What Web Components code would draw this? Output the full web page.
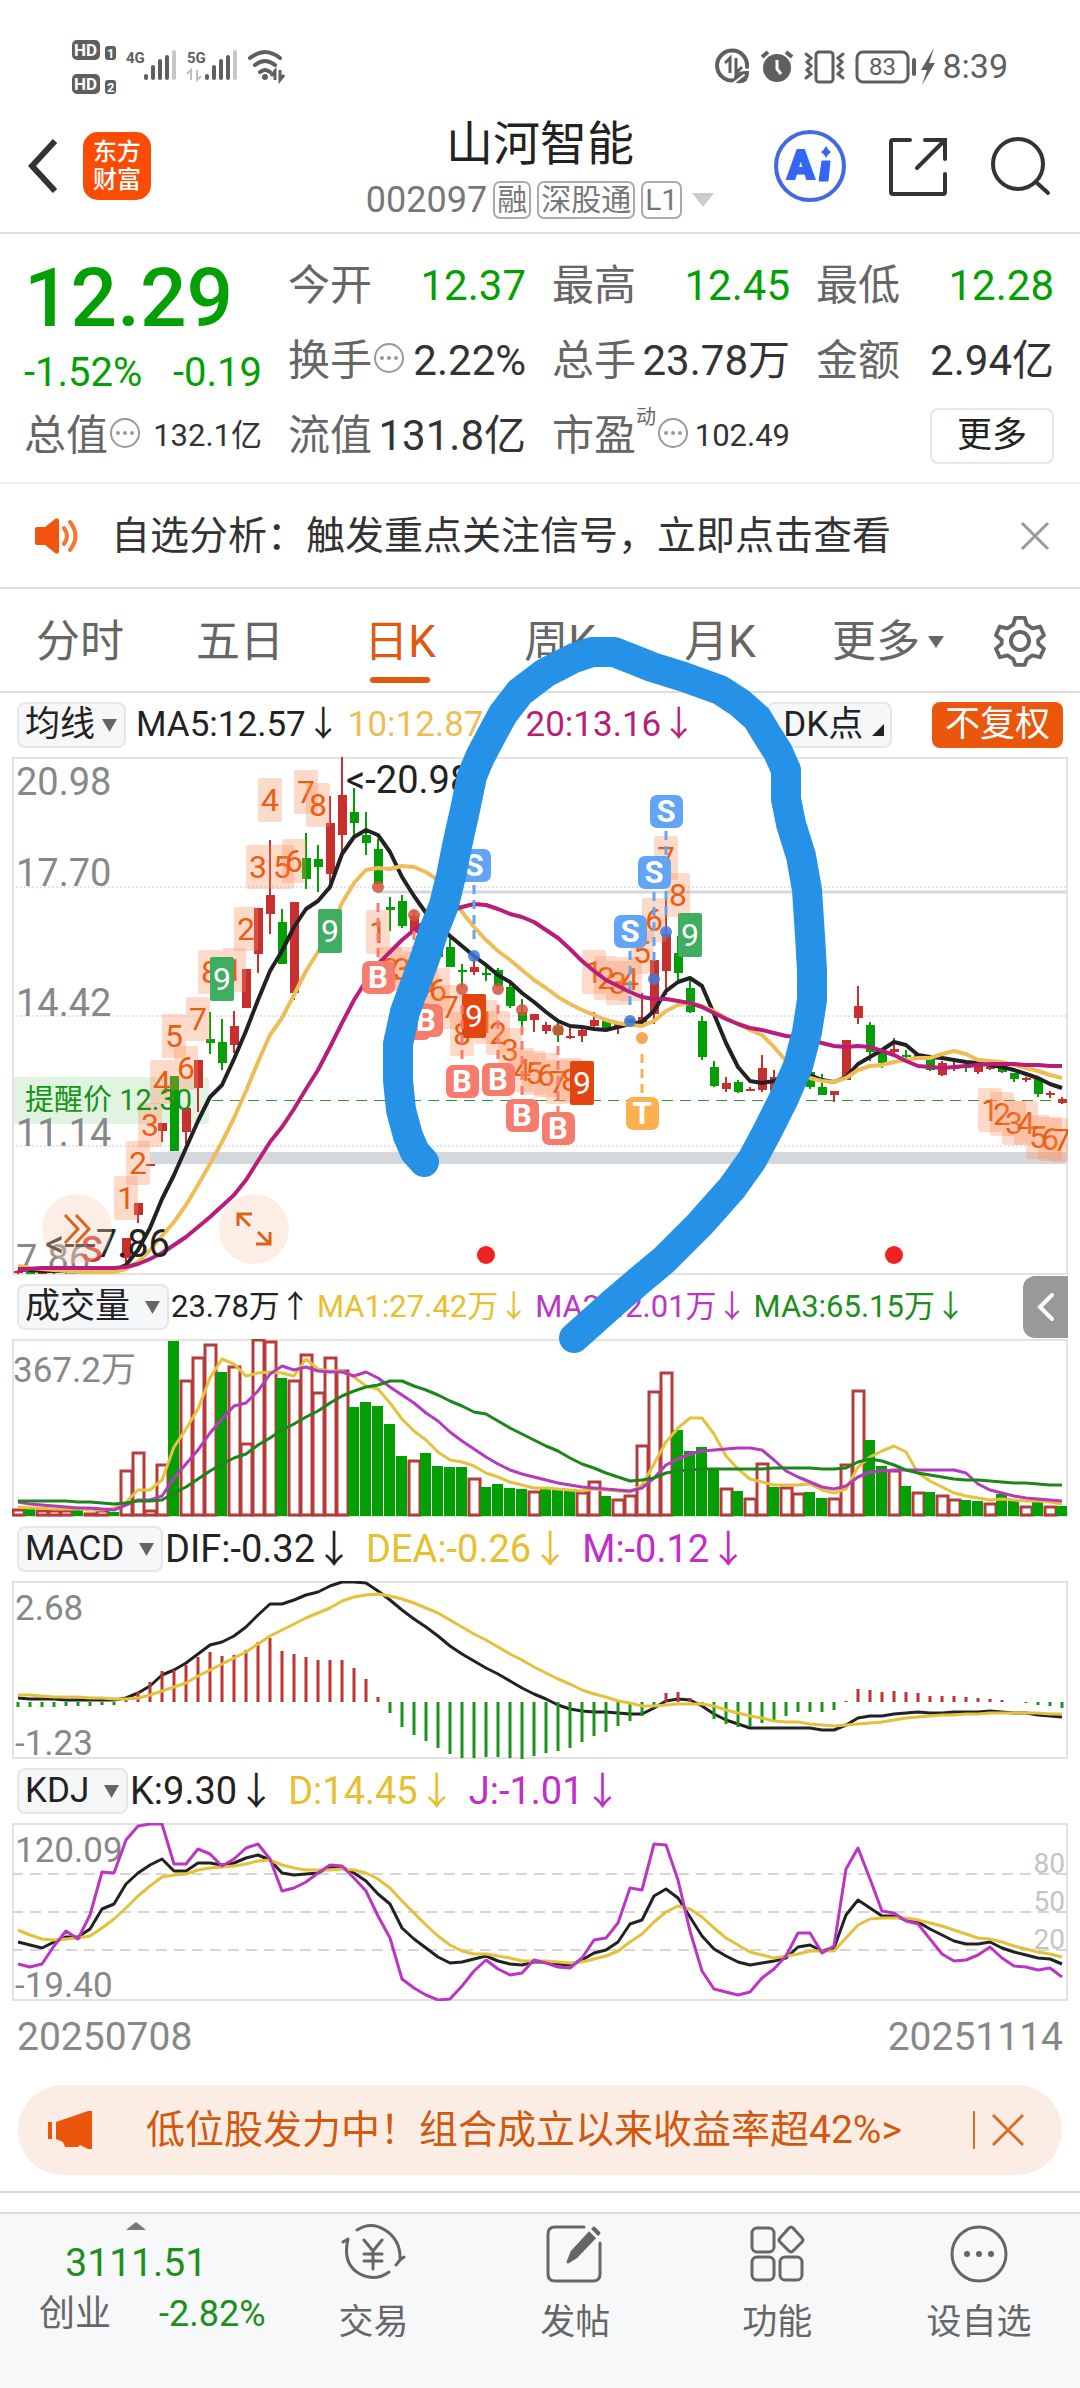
<!DOCTYPE html>
<html lang="zh-CN">
<head>
<meta charset="utf-8">
<meta name="viewport" content="width=device-width, initial-scale=1">
<title>山河智能 002097</title>
<style>
  body {
    margin: 0;
    background: #fff;
    color: #222;
    font-family: Roboto, "Noto Sans CJK SC", sans-serif;
  }
</style>
</head>
<body>
<stock-page>
  <status-bar></status-bar>
  <stock-header name="山河智能" code="002097"></stock-header>
  <quote-panel></quote-panel>
  <notice-bar>自选分析：触发重点关注信号，立即点击查看</notice-bar>
  <period-tabs></period-tabs>
  <indicator-row name="均线" wide>
    <value-item>MA5:12.57↓</value-item>
    <value-item color="#efbd57">10:12.87↓</value-item>
    <value-item color="#b81d7b">20:13.16↓</value-item>
    <chart-actions slot="end"></chart-actions>
  </indicator-row>
  <k-chart></k-chart>
  <indicator-row name="成交量" small>
    <value-item>23.78万↑</value-item>
    <value-item color="#e6c02e">MA1:27.42万↓</value-item>
    <value-item color="#bc36c4">MA2:42.01万↓</value-item>
    <value-item color="#1c8f1c">MA3:65.15万↓</value-item>
    <side-toggle slot="end"></side-toggle>
  </indicator-row>
  <volume-chart></volume-chart>
  <indicator-row name="MACD">
    <value-item>DIF:-0.32↓</value-item>
    <value-item color="#e6c02e">DEA:-0.26↓</value-item>
    <value-item color="#bf2fc7">M:-0.12↓</value-item>
  </indicator-row>
  <macd-chart></macd-chart>
  <indicator-row name="KDJ">
    <value-item>K:9.30↓</value-item>
    <value-item color="#e6c02e">D:14.45↓</value-item>
    <value-item color="#bf2fc7">J:-1.01↓</value-item>
  </indicator-row>
  <kdj-chart></kdj-chart>
  <date-range from="20250708" to="20251114"></date-range>
  <promo-banner>低位股发力中！组合成立以来收益率超42%&gt;</promo-banner>
  <bottom-bar></bottom-bar>
</stock-page>

<script>
class BaseElement extends HTMLElement {
  constructor() {
    super();
    this.attachShadow({ mode: "open" });
  }

  getTemplate() {
    const template = document.createElement("template");
    template.innerHTML = `
      ${this.getStyles()}
      ${this.getMarkup()}
    `;
    return template;
  }

  getStyles() {
    return "";
  }

  getMarkup() {
    return "<slot></slot>";
  }

  render() {
    this.shadowRoot.appendChild(this.getTemplate().content.cloneNode(true));
  }

  connectedCallback() {
    this.render();
  }
}

class StockPage extends BaseElement {
  getStyles() {
    return `
      <style>
        :host {
          display: block;
          position: relative;
        }

        .ink {
          position: absolute;
          top: 0;
          left: 0;
          width: 100%;
          pointer-events: none;
        }
      </style>
    `;
  }

  getMarkup() {
    return `
      <slot></slot>
      <svg class="ink" viewBox="0 0 1080 2388" aria-hidden="true">
        <polyline fill="none" stroke="#2592e8" stroke-width="30" stroke-linecap="round" stroke-linejoin="round"
          points="424,1162 415,1152 408,1136 401,1110 398,1080 398,1044 405,1012 416,982 425,958 434,930 444,905 451,876 457,846 465,810 472,776 480,757 490,738 503,714 520,692 545,673 574,658 592,652 614,652 632,659 652,667 684,677 720,690 740,703 757,718 766,733 778,752 786,770 786,799 791,824 801,856 807,890 810,936 812,970 812,1000 807,1032 798,1066 784,1098 768,1130 752,1160 732,1188 700,1224 664,1260 640,1280 612,1304 574,1338" />
      </svg>
    `;
  }
}

class StatusBar extends BaseElement {
  getStyles() {
    return `
      <style>
        :host {
          display: flex;
          justify-content: space-between;
          padding: 36px 72px 0;
          height: 100px;
          box-sizing: border-box;
          color: #5f5f5f;
        }

        .right {
          display: flex;
          align-items: flex-start;
          gap: 8px;
        }

        .time {
          font-size: 34px;
          line-height: 60px;
          height: 60px;
        }

        svg {
          display: block;
          overflow: visible;
        }
      </style>
    `;
  }

  bars(x) {
    return `
      <g fill="currentColor">
        <rect x="${x}" y="38" width="4" height="6" rx="2" />
        <rect x="${x + 7}" y="29" width="4" height="15" rx="2" />
        <rect x="${x + 14}" y="23" width="4" height="21" rx="2" />
        <rect x="${x + 21}" y="19" width="4" height="25" rx="2" />
        <rect x="${x + 28}" y="14" width="4" height="30" rx="2" opacity=".35" />
      </g>`;
  }

  getMarkup() {
    return `
      <svg width="214" height="60" font-family="Roboto" font-weight="700">
        <rect x="0" y="4" width="28" height="20" rx="5" fill="currentColor" />
        <text x="2" y="20" font-size="17" fill="#fff">HD</text>
        <rect x="33" y="10" width="11" height="14" rx="3" fill="currentColor" />
        <text x="35" y="22" font-size="13" fill="#fff">1</text>
        <rect x="0" y="38" width="28" height="20" rx="5" fill="currentColor" />
        <text x="2" y="54" font-size="17" fill="#fff">HD</text>
        <rect x="33" y="44" width="11" height="14" rx="3" fill="currentColor" />
        <text x="35" y="56" font-size="13" fill="#fff">2</text>
        <text x="54" y="27" font-size="15" fill="currentColor">4G</text>
        ${this.bars(72)}
        <text x="115" y="27" font-size="15" fill="currentColor">5G</text>
        ${this.bars(133)}
        <path d="M119 44V34l-4 4M125 34v10l4-4" fill="none" stroke="currentColor" stroke-width="2" opacity=".4" />
        <g fill="none" stroke="currentColor" stroke-width="4" stroke-linecap="round">
          <path d="M178 22q15-12 30 0" />
          <path d="M183 29q10-8 20 0" />
          <path d="M188 36q5-4 10 0" />
        </g>
        <circle cx="193" cy="41" r="3" fill="currentColor" />
        <path d="M203 44V35l-4 5M208 34v10l4-5" fill="none" stroke="currentColor" stroke-width="3" />
      </svg>
      <div class="right">
        <svg width="218" height="60" fill="none" stroke="currentColor" stroke-width="3" stroke-linecap="round">
          <path d="M20 44A15 15 0 1 1 31 31" stroke-width="4" />
          <path d="M14 37V22l-5 5M20 22v15l6-6" stroke-linecap="butt" />
          <path d="M18 46q-2-12 15-11 0 14-12 12" fill="currentColor" stroke="none" />
          <path d="M15 49l13-10" stroke="#fff" stroke-width="2" />
          <circle cx="61" cy="32" r="14" fill="currentColor" stroke="none" />
          <path d="M46 21l6-5M76 21l-6-5" stroke-width="4" stroke-linecap="butt" />
          <path d="M61 24v9l4 5" stroke="#fff" stroke-linecap="butt" />
          <rect x="100" y="16" width="17" height="30" rx="3" />
          <path d="M90 18l5 4-4 4 4 4-4 4 4 4-5 4M127 18l-5 4 4 4-4 4 4 4-4 4 5 4" />
          <rect x="141" y="16" width="51" height="30" rx="6" />
          <path d="M198 24v14" stroke-width="4" />
          <path d="M218 12l-13 22h6l-5 15 13-22h-6z" fill="currentColor" stroke="none" />
          <text x="153" y="39" font-size="24" font-family="Roboto" fill="currentColor" stroke="none">83</text>
        </svg>
        <span class="time">8:39</span>
      </div>
    `;
  }
}

class StockHeader extends BaseElement {
  getStyles() {
    return `
      <style>
        :host {
          display: grid;
          grid-template-columns: 1fr auto 1fr;
          align-items: center;
          height: 134px;
          box-sizing: border-box;
          padding: 0 28px;
          border-bottom: 2px solid #e0e0e0;
        }

        button {
          border: 0;
          padding: 0;
          background: none;
          color: inherit;
          font: inherit;
        }

        svg {
          display: block;
        }

        .left, .right {
          display: flex;
          align-items: center;
        }

        .left {
          gap: 26px;
        }

        .right {
          justify-content: flex-end;
          gap: 42px;
        }

        .logo {
          display: grid;
          place-content: center;
          width: 68px;
          height: 68px;
          border-radius: 15px;
          background: #fb4c06;
          color: #fff;
          font-size: 24px;
          font-weight: 500;
          line-height: 28px;
          text-decoration: none;
        }

        .middle {
          padding-top: 4px;
        }

        h1 {
          margin: 0 0 4px;
          font-size: 47px;
          font-weight: 400;
          line-height: 60px;
          text-align: center;
        }

        .code {
          display: flex;
          align-items: center;
          gap: 6px;
          color: #777;
          font-size: 36px;
          line-height: 44px;
        }

        .tag {
          padding: 0 2px;
          border: 2px solid #aaa;
          border-radius: 7px;
          font-size: 30px;
          line-height: 34px;
        }

        .arrow {
          margin-left: 4px;
        }
      </style>
    `;
  }

  getMarkup() {
    return `
      <div class="left">
        <button aria-label="返回">
          <svg width="29" height="56" fill="none" stroke="#333" stroke-width="6"><path d="M27 3L4 28l23 25" /></svg>
        </button>
        <a class="logo" href="#"><span>东方</span><span>财富</span></a>
      </div>
      <div class="middle">
        <h1>${this.getAttribute("name")}</h1>
        <div class="code">
          <span>${this.getAttribute("code")}</span>
          <span class="tag">融</span>
          <span class="tag">深股通</span>
          <span class="tag">L1</span>
          <svg class="arrow" width="22" height="16"><path d="M0 1h22L11 15z" fill="#ccc" /></svg>
        </div>
      </div>
      <div class="right">
        <button aria-label="智能助手">
          <svg width="72" height="72" viewBox="0 0 72 72">
            <circle cx="36" cy="36" r="34" fill="none" stroke="#4169e1" stroke-width="4" />
            <text x="13" y="49" font-family="Roboto" font-size="40" font-weight="900" fill="#3366f5" stroke="#3366f5" stroke-width="2">A</text>
            <path d="M48 31h8l-2 20h-9z" fill="#3366f5" stroke="#3366f5" stroke-linejoin="round" />
            <path d="M52 16q2 4 5 6-3 2-5 6-2-4-5-6 3-2 5-6z" fill="#3366f5" />
          </svg>
        </button>
        <button aria-label="分享">
          <svg width="60" height="60" viewBox="0 0 60 60" fill="none" stroke="#333" stroke-width="4" stroke-linecap="round">
            <path d="M22 4H5q-2 0-2 2v50q0 2 2 2h50q2 0 2-2V38M57 23V4H37M57 4L29 32" />
          </svg>
        </button>
        <button aria-label="搜索">
          <svg width="62" height="62" viewBox="0 0 62 62" fill="none" stroke="#333" stroke-width="4" stroke-linecap="round">
            <circle cx="28" cy="29" r="25" /><path d="M46 47l12 11" />
          </svg>
        </button>
      </div>
    `;
  }
}

class QuotePanel extends BaseElement {
  getStyles() {
    return `
      <style>
        :host {
          display: grid;
          grid-template-columns: repeat(4, 1fr);
          grid-template-rows: repeat(3, 75px);
          column-gap: 26px;
          padding: 14px 26px 9px 24px;
          height: 250px;
          box-sizing: border-box;
          border-bottom: 2px solid #eee;
          font-size: 42px;
          line-height: 74px;
          color: #333;
        }

        .price {
          grid-row: span 2;
          display: grid;
          grid-template-rows: 92px 58px;
          color: #049f04;
        }

        .price strong {
          font-size: 82px;
          font-weight: 500;
          line-height: 100px;
        }

        .change {
          display: flex;
          justify-content: space-between;
          font-size: 40px;
          line-height: 66px;
        }

        .cell {
          display: flex;
          align-items: center;
          justify-content: space-between;
          white-space: nowrap;
        }

        .label {
          display: flex;
          align-items: center;
          color: #666;
        }

        sup {
          align-self: flex-start;
          font-size: 20px;
          line-height: 36px;
        }

        .down {
          color: #049f04;
        }

        .small {
          font-size: 31px;
        }

        svg {
          margin-left: 1px;
          margin-bottom: 6px;
        }

        button {
          justify-self: end;
          align-self: center;
          width: 124px;
          height: 56px;
          border: 2px solid #e6e6e6;
          border-radius: 8px;
          background: #fff;
          color: #222;
          font: inherit;
          font-size: 35px;
          line-height: 50px;
          padding: 0;
        }
      </style>
    `;
  }

  cell(label, value, type = "", info = false, mark = "") {
    const icon = info
      ? `<svg width="32" height="32"><circle cx="16" cy="16" r="14" fill="none" stroke="#999" stroke-width="2"/><g fill="#999"><circle cx="9" cy="16" r="2"/><circle cx="16" cy="16" r="2"/><circle cx="23" cy="16" r="2"/></g></svg>`
      : "";
    return `
      <div class="cell">
        <span class="label">${label}${mark ? `<sup>${mark}</sup>` : ""}${icon}</span>
        <span class="${type}">${value}</span>
      </div>`;
  }

  getMarkup() {
    return `
      <div class="price">
        <strong>12.29</strong>
        <div class="change"><span>-1.52%</span><span>-0.19</span></div>
      </div>
      ${this.cell("今开", "12.37", "down")}
      ${this.cell("最高", "12.45", "down")}
      ${this.cell("最低", "12.28", "down")}
      ${this.cell("换手", "2.22%", "", true)}
      ${this.cell("总手", "23.78万")}
      ${this.cell("金额", "2.94亿")}
      ${this.cell("总值", "132.1亿", "small", true)}
      ${this.cell("流值", "131.8亿")}
      ${this.cell("市盈", "102.49", "small", true, "动")}
      <button>更多</button>
    `;
  }
}

class NoticeBar extends BaseElement {
  getStyles() {
    return `
      <style>
        :host {
          display: flex;
          align-items: center;
          height: 105px;
          box-sizing: border-box;
          padding: 0 30px 0 33px;
          border-bottom: 2px solid #ddd;
          font-size: 39px;
          line-height: 60px;
          color: #333;
        }

        a {
          flex: 1;
          margin-left: 32px;
          color: inherit;
          text-decoration: none;
        }

        button {
          border: 0;
          padding: 0;
          background: none;
        }

        svg {
          display: block;
        }
      </style>
    `;
  }

  getMarkup() {
    return `
      <svg width="46" height="38" viewBox="0 0 46 38">
        <path d="M2 12q0-2 2-2h8L22 2q4-2 4 2v30q0 4-4 2l-10-8H4q-2 0-2-2z" fill="#f2530d" />
        <path d="M31 11q6 8 0 16M37 5q11 14 0 28" fill="none" stroke="#f4762f" stroke-width="4" stroke-linecap="round" />
      </svg>
      <a href="#"><slot></slot></a>
      <button aria-label="关闭">
        <svg width="30" height="30"><path d="M2 2l26 26M28 2L2 28" stroke="#999" stroke-width="3" /></svg>
      </button>
    `;
  }
}

class PeriodTabs extends BaseElement {
  getStyles() {
    return `
      <style>
        :host {
          display: block;
          border-bottom: 2px solid #ddd;
        }

        nav {
          display: grid;
          grid-template-columns: repeat(6, 4fr) 3fr;
          height: 102px;
        }

        a, button {
          display: flex;
          flex-direction: column;
          align-items: center;
          padding: 18px 0 0;
          border: 0;
          background: none;
          color: #666;
          font: inherit;
          font-size: 44px;
          line-height: 70px;
          text-decoration: none;
        }

        .more {
          flex-direction: row;
          align-items: flex-start;
          justify-content: center;
          gap: 8px;
          padding-left: 16px;
        }

        .more svg {
          margin-top: 28px;
        }

        .active {
          color: #dc5a12;
        }

        .active::after {
          content: "";
          width: 60px;
          height: 6px;
          border-radius: 3px;
          background: #dc5a12;
        }

        .gear svg {
          margin-top: 7px;
        }
      </style>
    `;
  }

  getMarkup() {
    return `
      <nav>
        <a href="#">分时</a>
        <a href="#">五日</a>
        <a href="#" class="active">日K</a>
        <a href="#">周K</a>
        <a href="#">月K</a>
        <button class="more">更多<svg width="16" height="14"><path d="M0 1h16L8 13z" fill="#666" /></svg></button>
        <button class="gear" aria-label="设置">
          <svg width="52" height="54" viewBox="0 0 52 54" fill="none" stroke="#666" stroke-width="4" stroke-linejoin="round">
            <path d="M21 3h10l2 7 6 4 8-2 4 9-6 5v4l6 5-4 9-8-2-6 4-2 6H21l-2-6-6-4-8 2-4-9 6-5v-4l-6-5 4-9 8 2 6-4z" transform="translate(1 1) scale(.96)" />
            <circle cx="26" cy="27" r="9" />
          </svg>
        </button>
      </nav>
    `;
  }
}

class ValueItem extends BaseElement {
  getStyles() {
    return `
      <style>
        :host {
          display: block;
          white-space: nowrap;
          color: ${this.getAttribute("color") || "#222"};
        }
      </style>
    `;
  }
}

class IndicatorRow extends BaseElement {
  getStyles() {
    return `
      <style>
        :host {
          --gap: 13px;
          --pad: 36px;
          --lead: 2px;
          display: flex;
          align-items: center;
          height: 64px;
          padding: 0 12px 0 17px;
          font-size: 38px;
          line-height: 60px;
        }

        :host([small]) {
          --gap: 6px;
          font-size: 31px;
        }

        :host([wide]) {
          --gap: 7px;
          --pad: 28px;
          --lead: 10px;
          font-size: 35px;
        }

        .chip {
          position: relative;
          margin-right: var(--lead);
        }

        select {
          display: block;
          appearance: none;
          height: 46px;
          padding: 0 var(--pad) 0 6px;
          border: 2px solid #e4e6e8;
          border-radius: 8px;
          background: #f6f7f9;
          color: #222;
          font: inherit;
          font-size: 35px;
          line-height: 42px;
        }

        .chip svg {
          position: absolute;
          right: 9px;
          top: 17px;
          pointer-events: none;
        }

        .values {
          display: flex;
          flex: 1;
          gap: var(--gap);
        }
      </style>
    `;
  }

  getMarkup() {
    const name = this.getAttribute("name");
    return `
      <div class="chip">
        <select aria-label="指标"><option>${name}</option></select>
        <svg width="15" height="13"><path d="M0 0h15L7.500 13z" fill="#666" /></svg>
      </div>
      <div class="values"><slot></slot></div>
      <slot name="end"></slot>
    `;
  }
}

class ChartActions extends BaseElement {
  getStyles() {
    return `
      <style>
        :host {
          display: flex;
          gap: 40px;
          padding-right: 5px;
        }

        button {
          height: 46px;
          border: 2px solid #e4e6e8;
          border-radius: 8px;
          background: #f6f7f9;
          padding: 0 6px 0 14px;
          color: #222;
          font: inherit;
          font-size: 35px;
          line-height: 42px;
          white-space: nowrap;
        }

        .adjust {
          padding: 0 11px;
          border-color: #e9560c;
          background: #e9560c;
          color: #fff;
        }
      </style>
    `;
  }

  getMarkup() {
    return `
      <button>DK点 <svg width="12" height="12"><path d="M12 0v12H0z" fill="#222" /></svg></button>
      <button class="adjust">不复权</button>
    `;
  }
}

class SideToggle extends BaseElement {
  getStyles() {
    return `
      <style>
        :host {
          display: block;
        }

        button {
          display: grid;
          place-content: center;
          width: 45px;
          height: 62px;
          padding: 0;
          border: 0;
          border-radius: 12px 0 0 12px;
          background: #999;
        }
      </style>
    `;
  }

  getMarkup() {
    return `
      <button aria-label="展开">
        <svg width="18" height="30" fill="none" stroke="#fff" stroke-width="4" stroke-linecap="round"><path d="M15 3L3 15l12 12" /></svg>
      </button>
    `;
  }
}

// 88 sessions, one every 12 units
const STEP = 12;
const WIDTH = 1056;
const px = (i) => 6 + STEP * i;

class BaseChart extends BaseElement {
  getStyles() {
    return `
      <style>
        :host {
          display: block;
          position: relative;
          margin: 0 12px;
        }

        svg {
          display: block;
          width: 100%;
        }

        text {
          font-family: Roboto, "Noto Sans CJK SC", sans-serif;
        }

        .axis {
          fill: #888;
          font-size: 35px;
        }
      </style>
    `;
  }

  line(values, color, width = 3) {
    const points = values.map((y, i) => `${px(i)},${y}`).join(" ");
    return `<polyline points="${points}" fill="none" stroke="${color}" stroke-width="${width}" stroke-linejoin="round" />`;
  }

  frame(height) {
    return `<rect x="1" y="1" width="${WIDTH - 2}" height="${height - 2}" fill="none" stroke="#e2e2e2" stroke-width="2" />`;
  }
}

// index, high, body top, body bottom, low, up
const CANDLES = [
  [0, 513, 514, 516, 517, 1], [1, 513, 515, 517, 517, 0], [2, 514, 515, 517, 517, 1], [3, 513, 514, 516, 517, 1],
  [4, 514, 515, 516, 517, 0], [5, 513, 515, 517, 517, 0], [6, 514, 515, 516, 517, 1], [7, 513, 514, 516, 517, 1],
  [8, 512, 513, 515, 516, 0], [9, 481, 481, 501, 510, 1], [10, 446, 446, 458, 466, 1], [11, 407, 407, 409, 409, 1],
  [12, 366, 366, 374, 385, 1], [13, 319, 319, 394, 394, 0], [14, 351, 351, 375, 387, 1], [15, 303, 303, 331, 355, 1],
  [16, 255, 282, 286, 297, 0], [17, 262, 285, 306, 313, 0], [18, 254, 269, 288, 296, 1], [19, 212, 212, 251, 251, 1],
  [20, 151, 151, 197, 216, 1], [21, 83, 138, 157, 177, 1], [22, 152, 165, 207, 207, 0], [23, 145, 145, 236, 243, 1],
  [24, 76, 101, 122, 132, 0], [25, 88, 102, 110, 135, 0], [26, 39, 66, 117, 133, 1], [27, 0, 38, 78, 95, 1],
  [28, 31, 55, 66, 78, 0], [29, 55, 78, 86, 98, 0], [30, 82, 92, 127, 127, 0], [31, 140, 150, 153, 174, 0],
  [32, 138, 144, 169, 171, 0], [33, 154, 159, 176, 180, 1], [34, 160, 170, 190, 195, 0], [35, 170, 180, 200, 204, 0],
  [36, 177, 190, 210, 210, 0], [37, 207, 213, 215, 230, 0], [38, 202, 210, 215, 218, 1], [39, 210, 216, 218, 224, 0],
  [40, 211, 213, 229, 229, 0], [41, 225, 230, 249, 251, 0], [42, 242, 255, 264, 271, 0], [43, 257, 257, 263, 275, 1],
  [44, 265, 268, 274, 277, 1], [45, 266, 269, 278, 285, 0], [46, 271, 279, 281, 282, 1], [47, 270, 273, 279, 285, 1],
  [48, 255, 263, 269, 270, 1], [49, 264, 264, 271, 271, 0], [50, 266, 266, 270, 277, 1], [51, 262, 262, 269, 269, 0],
  [52, 236, 260, 265, 270, 1], [53, 203, 203, 257, 267, 1], [54, 141, 177, 214, 238, 1], [55, 179, 196, 216, 226, 0],
  [56, 220, 231, 255, 256, 0], [57, 259, 264, 300, 303, 0], [58, 304, 310, 329, 330, 0], [59, 320, 326, 332, 335, 1],
  [60, 323, 325, 335, 336, 0], [61, 330, 332, 334, 334, 1], [62, 298, 311, 333, 335, 1], [63, 313, 320, 334, 334, 1],
  [64, 318, 320, 328, 334, 0], [65, 310, 316, 326, 330, 1], [66, 313, 315, 330, 332, 0], [67, 317, 330, 338, 338, 0],
  [68, 334, 334, 338, 345, 1], [69, 283, 283, 323, 323, 1], [70, 229, 249, 261, 267, 1], [71, 265, 268, 295, 304, 0],
  [72, 291, 295, 306, 311, 0], [73, 281, 292, 295, 298, 1], [74, 293, 298, 300, 303, 0], [75, 297, 297, 300, 300, 1],
  [76, 298, 300, 313, 314, 0], [77, 304, 306, 318, 319, 1], [78, 305, 310, 312, 314, 1], [79, 305, 309, 311, 315, 0],
  [80, 306, 307, 315, 317, 1], [81, 308, 310, 312, 313, 1], [82, 309, 310, 315, 316, 0], [83, 316, 316, 322, 325, 0],
  [84, 320, 321, 323, 325, 1], [85, 321, 322, 337, 340, 0], [86, 334, 336, 338, 341, 1], [87, 340, 342, 346, 347, 1],
];

const MA5 = [512, 513, 514, 514, 514, 515, 515, 515, 513, 508, 493, 471, 442, 418, 391, 364, 340, 328, 302, 274, 243, 214, 194, 170, 152, 144, 130, 97, 80, 73, 78, 95, 120, 139, 156, 168, 179, 189, 199, 208, 218, 225, 236, 245, 255, 264, 269, 270, 272, 273, 270, 267, 265, 254, 234, 225, 221, 229, 257, 286, 310, 324, 326, 324, 318, 315, 318, 323, 325, 320, 307, 300, 293, 285, 288, 298, 300, 301, 303, 305, 306, 308, 310, 313, 317, 321, 327, 331];
const MA10 = [509, 511, 512, 513, 514, 515, 515, 515, 515, 512, 505, 493, 479, 465, 448, 428, 407, 385, 361, 334, 305, 278, 261, 238, 214, 195, 173, 146, 126, 113, 111, 112, 109, 110, 115, 123, 138, 155, 170, 183, 194, 203, 213, 223, 231, 240, 247, 253, 258, 263, 266, 268, 269, 264, 254, 248, 246, 249, 254, 261, 267, 273, 278, 290, 304, 313, 321, 324, 325, 321, 313, 309, 308, 305, 303, 301, 301, 297, 294, 297, 303, 304, 305, 308, 311, 314, 318, 321];
const MA20 = [512, 512, 511, 511, 511, 511, 511, 511, 511, 510, 507, 502, 496, 488, 480, 470, 460, 449, 438, 423, 404, 385, 370, 352, 332, 313, 290, 266, 243, 224, 207, 195, 183, 173, 164, 158, 154, 150, 147, 148, 152, 157, 160, 165, 173, 181, 192, 204, 214, 223, 229, 235, 240, 242, 242, 244, 246, 250, 256, 262, 267, 271, 273, 276, 279, 280, 283, 286, 289, 290, 289, 290, 294, 298, 304, 309, 310, 311, 310, 309, 308, 307, 307, 307, 308, 308, 309, 309];

// index, top, digit
const COUNTS = [
  [9, 419, 1], [10, 384, 2], [11, 346, 3], [12, 303, 4], [13, 257, 5], [14, 289, 6], [15, 240, 7], [16, 193, 8],
  [18, 191, 1], [19, 150, 2], [20, 88, 3], [21, 21, 4], [22, 88, 5], [23, 82, 6], [24, 13, 7], [25, 26, 8],
  [30, 153, 1], [31, 190, 2], [32, 190, 3], [33, 195, 4], [34, 203, 5], [35, 211, 6], [36, 228, 7], [37, 255, 8],
  [39, 243, 1], [40, 254, 2], [41, 271, 3], [42, 291, 4], [43, 294, 5], [44, 296, 6], [45, 303, 7], [46, 301, 8],
  [48, 193, 1], [49, 199, 2], [50, 204, 3], [51, 200, 4], [52, 173, 5], [53, 141, 6], [54, 79, 7], [55, 116, 8],
  [81, 331, 1], [82, 335, 2], [83, 344, 3], [84, 344, 4], [85, 358, 5], [86, 360, 6], [87, 361, 7],
];
const NINES = [[17, 200, "#3fae63"], [26, 152, "#3fae63"], [38, 237, "#e2450f"], [47, 304, "#e2450f"], [56, 156, "#3fae63"]];

// index, box top, dot y, letter
const MARKS = [
  [54, 38, 175, "S"], [53, 99, 222, "S"], [51, 158, 264, "S"], [38, 92, 199, "S"],
  [30, 204, 130, "B"], [33, 250, 158, "B"], [34, 247, 200, "B"], [37, 308, 232, "B"], [40, 306, 232, "B"],
  [42, 342, 253, "B"], [45, 355, 273, "B"], [52, 340, 281, "T"],
];
const MARK_COLORS = { S: ["#62a4f6", "#3f78dc"], B: ["#f67c6e", "#d5543e"], T: ["#fdb04e", "#f3983a"] };

class KChart extends BaseChart {
  getStyles() {
    return `
      ${super.getStyles()}
      <style>
        .price {
          fill: #888;
          font-size: 38px;
        }

        .peak {
          fill: #222;
          font-size: 38px;
        }

        button {
          position: absolute;
          bottom: 11px;
          display: grid;
          place-content: center;
          width: 70px;
          height: 70px;
          padding: 0;
          border: 0;
          border-radius: 50%;
          background: rgba(250, 205, 180, .35);
        }

        .next {
          left: 30px;
        }

        .expand {
          left: 207px;
        }
      </style>
    `;
  }

  candle([i, high, top, bottom, low, up]) {
    const x = px(i);
    const color = up ? "#c8302f" : "#049f04";
    return `<path d="M${x} ${high}V${low}" stroke="${color}" stroke-width="2" /><rect x="${x - 4}" y="${top}" width="9" height="${bottom - top}" fill="${color}" />`;
  }

  count([i, top, digit]) {
    const x = px(i);
    return `<rect x="${x - 12}" y="${top}" width="24" height="44" rx="2" fill="#fb8f5f" fill-opacity=".33" /><text x="${x}" y="${top + 33}" text-anchor="middle" font-size="32" fill="#e85e14">${digit}</text>`;
  }

  nine([i, top, color]) {
    const x = px(i);
    return `<rect x="${x - 12}" y="${top}" width="24" height="44" rx="2" fill="${color}" /><text x="${x}" y="${top + 33}" text-anchor="middle" font-size="32" fill="#fff">9</text>`;
  }

  mark([i, top, dot, letter]) {
    const x = px(i);
    const [box, ink] = MARK_COLORS[letter];
    const from = letter === "S" ? top + 36 : dot + 16;
    const to = letter === "S" ? dot - 16 : top;
    return `
      <path d="M${x} ${from}V${to}" stroke="${box}" stroke-width="3" stroke-dasharray="9 6" />
      <circle cx="${x}" cy="${dot}" r="6" fill="${ink}" fill-opacity=".85" />
      <rect x="${x - 16}" y="${top}" width="33" height="33" rx="7" fill="${box}" />
      <text x="${x}" y="${top + 27}" text-anchor="middle" font-size="31" font-weight="700" fill="#fff">${letter}</text>`;
  }

  getMarkup() {
    return `
      <svg viewBox="0 0 ${WIDTH} 518" role="img" aria-label="日K线">
        <rect y="320" width="197" height="47" rx="4" fill="#e0f4e1" />
        <path d="M0 130H1056M0 259H1056M0 389H1056" stroke="#ccc" stroke-width="1" stroke-dasharray="2 2" />
        <path d="M366 135H1056" stroke="#d4d7db" stroke-width="3" />
        <path d="M138 401H1056" stroke="#d4d7db" stroke-width="12" />
        <path d="M200 343.500H1040" stroke="#2f9e2f" stroke-width="1" stroke-dasharray="11 7" />
        ${this.frame(518)}
        <text class="price" x="4" y="38">20.98</text>
        <text class="price" x="4" y="129">17.70</text>
        <text class="price" x="4" y="259">14.42</text>
        <text class="price" x="4" y="389">11.14</text>
        <text class="price" x="4" y="515">7.86</text>
        ${CANDLES.map(this.candle).join("")}
        ${COUNTS.map(this.count).join("")}
        <text x="13" y="353" font-size="29" fill="#149414">提醒价 12.30</text>
        ${this.line(MA5, "#222", 4)}
        ${this.line(MA10, "#efbd57", 4)}
        ${this.line(MA20, "#b81d7b", 4)}
        ${NINES.map(this.nine).join("")}
        ${MARKS.map(this.mark).join("")}
        <text x="69" y="505" font-size="36" font-weight="500" fill="#cf3333">S</text>
        <text class="peak" x="334" y="36">&lt;-20.98</text>
        <text class="peak" x="33" y="500">&lt;---7.86</text>
        <circle cx="474" cy="498" r="9" fill="#ee2222" />
        <circle cx="882" cy="498" r="9" fill="#ee2222" />
      </svg>
      <button class="next" aria-label="下一页">
        <svg width="30" height="32" viewBox="0 0 30 32" fill="none" stroke="#d9641e" stroke-width="3"><path d="M3 2l13 14L3 30M14 2l13 14-13 14" /></svg>
      </button>
      <button class="expand" aria-label="全屏">
        <svg width="36" height="36" viewBox="0 0 36 36" fill="none" stroke="#d9641e" stroke-width="3"><path d="M2 15V3h14M3 4l11 11M34 21v12H20M33 32L22 21" /></svg>
      </button>
    `;
  }
}

// bar heights, negative on falling days
const VOLUMES = [7, -7, 6, 6, 6, -6, 3, 6, -4, 46, 64, 6, 52, -175, 136, 159, 172, -144, 150, 73, 177, 175, -138, 136, 162, 124, 159, 146, -109, -114, -110, -92, -60, 56, -63, -50, -49, -49, 38, -29, -32, -28, -27, 25, -27, -26, -25, 24, 35, -20, 17, 21, 71, 125, 144, -86, -65, -69, -48, 28, -25, 18, 53, -29, 29, 23, -24, -18, 18, 52, 126, -76, -50, 46, -30, 24, -24, 21, 17, -16, -15, 13, -22, -15, 10, -14, 10, -10];
const VOL_MA1 = [168, 169, 169, 170, 170, 170, 171, 171, 169, 163, 151, 151, 141, 108, 90, 70, 39, 20, 25, 37, 34, 33, 34, 37, 20, 30, 32, 32, 38, 47, 50, 64, 80, 92, 101, 113, 121, 123, 127, 134, 138, 143, 146, 149, 149, 150, 151, 152, 150, 151, 152, 153, 146, 125, 103, 89, 79, 79, 95, 117, 130, 140, 143, 146, 146, 146, 145, 151, 154, 150, 128, 118, 112, 107, 113, 134, 142, 148, 154, 157, 159, 161, 160, 161, 162, 162, 163, 165];
const VOL_MA2 = [163, 165, 166, 167, 168, 169, 169, 170, 171, 166, 161, 161, 157, 139, 125, 111, 94, 80, 67, 64, 52, 35, 27, 31, 28, 32, 33, 33, 37, 33, 39, 48, 56, 64, 74, 82, 93, 102, 110, 118, 125, 131, 135, 138, 141, 144, 146, 148, 149, 150, 151, 152, 149, 139, 126, 120, 115, 112, 111, 110, 109, 109, 111, 121, 132, 138, 143, 148, 150, 147, 138, 133, 132, 131, 131, 131, 131, 131, 131, 134, 145, 151, 154, 157, 159, 160, 161, 162];
const VOL_MA3 = [162, 162, 162, 162, 162, 163, 163, 164, 165, 164, 162, 162, 161, 154, 148, 140, 132, 125, 119, 115, 106, 99, 91, 85, 78, 72, 64, 57, 52, 48, 46, 42, 42, 47, 51, 56, 62, 67, 73, 75, 82, 89, 95, 101, 107, 112, 119, 125, 129, 134, 138, 142, 141, 139, 134, 132, 131, 130, 130, 130, 130, 130, 130, 129, 129, 129, 129, 130, 130, 129, 123, 120, 122, 126, 131, 134, 136, 138, 140, 141, 141, 142, 143, 144, 144, 145, 146, 146];

class VolumeChart extends BaseChart {
  bar(v, i) {
    const x = STEP * i;
    const h = Math.abs(v);
    return v < 0
      ? `<rect x="${x}" y="${177 - h}" width="11" height="${h}" fill="#049f04" />`
      : `<rect x="${x + 1}" y="${178 - h}" width="11" height="${h - 2}" fill="#fff" stroke="#b43c3a" stroke-width="3" />`;
  }

  getMarkup() {
    return `
      <svg viewBox="0 0 ${WIDTH} 178" role="img" aria-label="成交量">
        ${this.frame(178)}
        ${VOLUMES.map(this.bar).join("")}
        <text class="axis" x="1" y="43">367.2万</text>
        ${this.line(VOL_MA1, "#e6c23c")}
        ${this.line(VOL_MA2, "#b43bbd")}
        ${this.line(VOL_MA3, "#1c861c")}
      </svg>
    `;
  }
}

const MACD = [-5, -5, -5, -5, -4, -4, -4, -3, -3, 2, 10, 20, 31, 32, 37, 45, 50, 46, 47, 52, 60, 64, 51, 48, 45, 42, 42, 42, 34, 23, 5, -11, -25, -33, -39, -46, -52, -56, -56, -55, -55, -56, -57, -54, -51, -49, -46, -40, -34, -30, -24, -19, -14, -4, 9, 10, 4, -3, -17, -22, -25, -25, -21, -18, -14, -10, -10, -10, -8, 1, 13, 12, 10, 11, 10, 9, 6, 6, 6, 5, 4, 3, 2, 0, -1, -3, -4, -6];
const DIF = [117, 118, 118, 118, 119, 119, 119, 119, 119, 117, 112, 105, 94, 89, 82, 73, 64, 61, 55, 46, 34, 23, 23, 19, 14, 11, 5, 1, 1, 2, 10, 19, 29, 38, 46, 55, 65, 73, 80, 87, 93, 100, 107, 113, 118, 124, 128, 130, 131, 131, 132, 133, 133, 127, 120, 118, 119, 125, 133, 139, 143, 147, 147, 147, 147, 147, 147, 149, 149, 144, 137, 135, 135, 133, 132, 131, 132, 132, 131, 131, 131, 130, 131, 132, 132, 134, 135, 136];
const DEA = [114, 114, 115, 116, 116, 116, 117, 117, 118, 118, 117, 114, 110, 106, 102, 95, 89, 83, 77, 71, 63, 55, 49, 43, 37, 32, 27, 20, 16, 14, 13, 15, 18, 22, 27, 32, 39, 46, 53, 59, 66, 73, 79, 86, 92, 98, 103, 109, 113, 116, 120, 122, 125, 125, 124, 123, 123, 123, 125, 129, 132, 135, 137, 140, 141, 141, 143, 144, 145, 144, 143, 142, 141, 139, 137, 136, 135, 134, 134, 133, 133, 132, 132, 132, 132, 132, 133, 133];

class MacdChart extends BaseChart {
  getMarkup() {
    const bars = MACD.map((v, i) => `<path d="M${px(i)} 121v${-v}" stroke="${v > 0 ? "#bb3532" : "#1c941c"}" stroke-width="3" />`);
    return `
      <svg viewBox="0 0 ${WIDTH} 178" role="img" aria-label="MACD">
        ${this.frame(178)}
        <text class="axis" x="3" y="39">2.68</text>
        <text class="axis" x="3" y="174">-1.23</text>
        ${this.line(DIF, "#222")}
        ${bars.join("")}
        ${this.line(DEA, "#e3c13a")}
      </svg>
    `;
  }
}

const K = [119, 122, 125, 119, 114, 114, 106, 86, 81, 61, 50, 42, 36, 48, 48, 40, 40, 42, 40, 35, 32, 37, 50, 52, 51, 50, 44, 44, 50, 58, 71, 81, 105, 116, 125, 134, 140, 139, 136, 133, 138, 141, 142, 139, 139, 141, 142, 137, 130, 127, 119, 101, 97, 73, 66, 75, 94, 113, 126, 133, 139, 142, 140, 138, 135, 124, 122, 128, 125, 92, 77, 85, 93, 93, 97, 99, 106, 112, 118, 121, 121, 119, 125, 129, 132, 135, 136, 141];
const D = [107, 112, 116, 117, 116, 115, 113, 105, 96, 85, 73, 63, 54, 52, 51, 47, 45, 44, 43, 41, 38, 37, 42, 45, 47, 47, 47, 46, 47, 50, 56, 65, 78, 90, 102, 113, 122, 128, 131, 131, 133, 135, 138, 138, 138, 139, 140, 139, 136, 133, 128, 119, 111, 99, 89, 83, 86, 94, 105, 115, 122, 129, 132, 135, 133, 131, 128, 128, 128, 115, 102, 96, 95, 95, 95, 97, 100, 103, 107, 111, 115, 116, 119, 123, 126, 129, 131, 134];
const J = [141, 144, 141, 123, 108, 116, 92, 49, 50, 17, 3, 1, 1, 41, 41, 26, 31, 43, 36, 25, 21, 36, 68, 65, 59, 50, 42, 43, 55, 68, 93, 115, 156, 165, 172, 177, 176, 163, 148, 137, 146, 152, 150, 137, 140, 144, 145, 135, 117, 115, 100, 65, 67, 21, 22, 57, 108, 148, 166, 169, 172, 169, 155, 146, 133, 110, 110, 130, 123, 46, 25, 56, 88, 90, 98, 101, 116, 131, 138, 137, 132, 124, 135, 143, 144, 147, 145, 154];

class KdjChart extends BaseChart {
  getMarkup() {
    return `
      <svg viewBox="0 0 ${WIDTH} 178" role="img" aria-label="KDJ">
        ${this.frame(178)}
        <path d="M0 51H1056M0 89H1056M0 127H1056" stroke="#d6d6d6" stroke-width="2" stroke-dasharray="11 7" />
        <text class="axis" x="3" y="39">120.09</text>
        <text class="axis" x="3" y="174">-19.40</text>
        <g font-size="28" fill="#c4c4c4" text-anchor="end">
          <text x="1053" y="50">80</text>
          <text x="1053" y="88">50</text>
          <text x="1053" y="126">20</text>
        </g>
        ${this.line(K, "#222")}
        ${this.line(D, "#e3c13a")}
        ${this.line(J, "#bb36c2")}
      </svg>
    `;
  }
}

class DateRange extends BaseElement {
  getStyles() {
    return `
      <style>
        :host {
          display: flex;
          justify-content: space-between;
          padding: 6px 17px 18px;
          color: #888;
          font-size: 39px;
          line-height: 60px;
        }
      </style>
    `;
  }

  getMarkup() {
    return `<time>${this.getAttribute("from")}</time><time>${this.getAttribute("to")}</time>`;
  }
}

class PromoBanner extends BaseElement {
  getStyles() {
    return `
      <style>
        :host {
          display: block;
          padding: 0 18px 16px;
          border-bottom: 2px solid #d9d9de;
        }

        .banner {
          display: flex;
          align-items: center;
          height: 90px;
          padding: 0 37px 0 28px;
          border-radius: 45px;
          background: #fcede4;
          color: #d2590f;
          font-size: 39px;
          line-height: 60px;
        }

        a {
          flex: 1;
          margin-left: 52px;
          color: inherit;
          text-decoration: none;
        }

        button {
          border: 0;
          border-left: 2px solid #d2712f;
          padding: 2px 0 2px 16px;
          background: none;
        }

        svg {
          display: block;
        }
      </style>
    `;
  }

  getMarkup() {
    return `
      <div class="banner">
        <svg width="48" height="42" viewBox="0 0 48 42" fill="#e9560c">
          <path d="M2 13h4v17H2zM10 13L42 2h4v38h-4l-8-4-2 2H19l-2-5-7-3z" />
        </svg>
        <a href="#"><slot></slot></a>
        <button aria-label="关闭">
          <svg width="34" height="34"><path d="M2 2l30 30M32 2L2 32" stroke="#e06a26" stroke-width="3" /></svg>
        </button>
      </div>
    `;
  }
}

class BottomBar extends BaseElement {
  getStyles() {
    return `
      <style>
        :host {
          display: block;
          margin-top: 19px;
          border-top: 2px solid #d9d9de;
          background: #f7f8fa;
        }

        nav {
          display: grid;
          grid-template-columns: 27fr repeat(4, 20fr);
          height: 175px;
          color: #666;
          font-size: 35px;
        }

        a {
          display: flex;
          flex-direction: column;
          align-items: center;
          color: inherit;
          text-decoration: none;
        }

        .tab {
          gap: 14px;
          padding-top: 8px;
          line-height: 50px;
        }

        .index {
          padding-top: 8px;
        }

        .index strong {
          color: #1d8f1d;
          font-size: 39px;
          font-weight: 400;
          line-height: 66px;
        }

        .row {
          display: flex;
          gap: 48px;
          padding-left: 32px;
          font-size: 36px;
          line-height: 36px;
        }

        .row b {
          color: #1d8f1d;
          font-weight: 400;
        }
      </style>
    `;
  }

  tab(label, icon) {
    return `
      <a class="tab" href="#">
        <svg width="66" height="62" viewBox="0 0 66 62" fill="none" stroke="#666" stroke-width="3" stroke-linecap="round" stroke-linejoin="round">${icon}</svg>
        <span>${label}</span>
      </a>`;
  }

  getMarkup() {
    return `
      <nav>
        <a class="index" href="#">
          <svg width="20" height="8"><path d="M10 0l10 8H0z" fill="#777" /></svg>
          <strong>3111.51</strong>
          <span class="row"><span>创业</span><b>-2.82%</b></span>
        </a>
        ${this.tab("交易", `<path d="M17 8q14-9 28 0 16 10 15 30l4-3M60 38l-4 5M49 50q-14 10-29 2Q2 42 8 17l-5 3M24 18l9 11 9-11M33 29v18M24 32h18M24 39h18" />`)}
        ${this.tab("发帖", `<path d="M42 5H13q-7 0-7 7v40q0 7 7 7h38q7 0 7-7V21" /><path d="M26 40l4-10L52 6l5 5-23 24z" fill="#666" /><path d="M48 8l7 7" stroke="#f7f8fa" />`)}
        ${this.tab("功能", `<rect x="8" y="6" width="22" height="24" rx="5" /><rect x="8" y="35" width="22" height="23" rx="5" /><rect x="36" y="35" width="22" height="23" rx="5" /><path d="M45 6q2-2 4 0l9 10q2 2 0 4l-9 9q-2 2-4 0l-9-9q-2-2 0-4z" />`)}
        ${this.tab("设自选", `<circle cx="33" cy="32" r="27" /><g fill="#666" stroke="none"><circle cx="21" cy="32" r="3" /><circle cx="33" cy="32" r="3" /><circle cx="45" cy="32" r="3" /></g>`)}
      </nav>
    `;
  }
}

customElements.define("stock-page", StockPage);
customElements.define("status-bar", StatusBar);
customElements.define("stock-header", StockHeader);
customElements.define("quote-panel", QuotePanel);
customElements.define("notice-bar", NoticeBar);
customElements.define("period-tabs", PeriodTabs);
customElements.define("value-item", ValueItem);
customElements.define("indicator-row", IndicatorRow);
customElements.define("chart-actions", ChartActions);
customElements.define("side-toggle", SideToggle);
customElements.define("k-chart", KChart);
customElements.define("volume-chart", VolumeChart);
customElements.define("macd-chart", MacdChart);
customElements.define("kdj-chart", KdjChart);
customElements.define("date-range", DateRange);
customElements.define("promo-banner", PromoBanner);
customElements.define("bottom-bar", BottomBar);
</script>
</body>
</html>
